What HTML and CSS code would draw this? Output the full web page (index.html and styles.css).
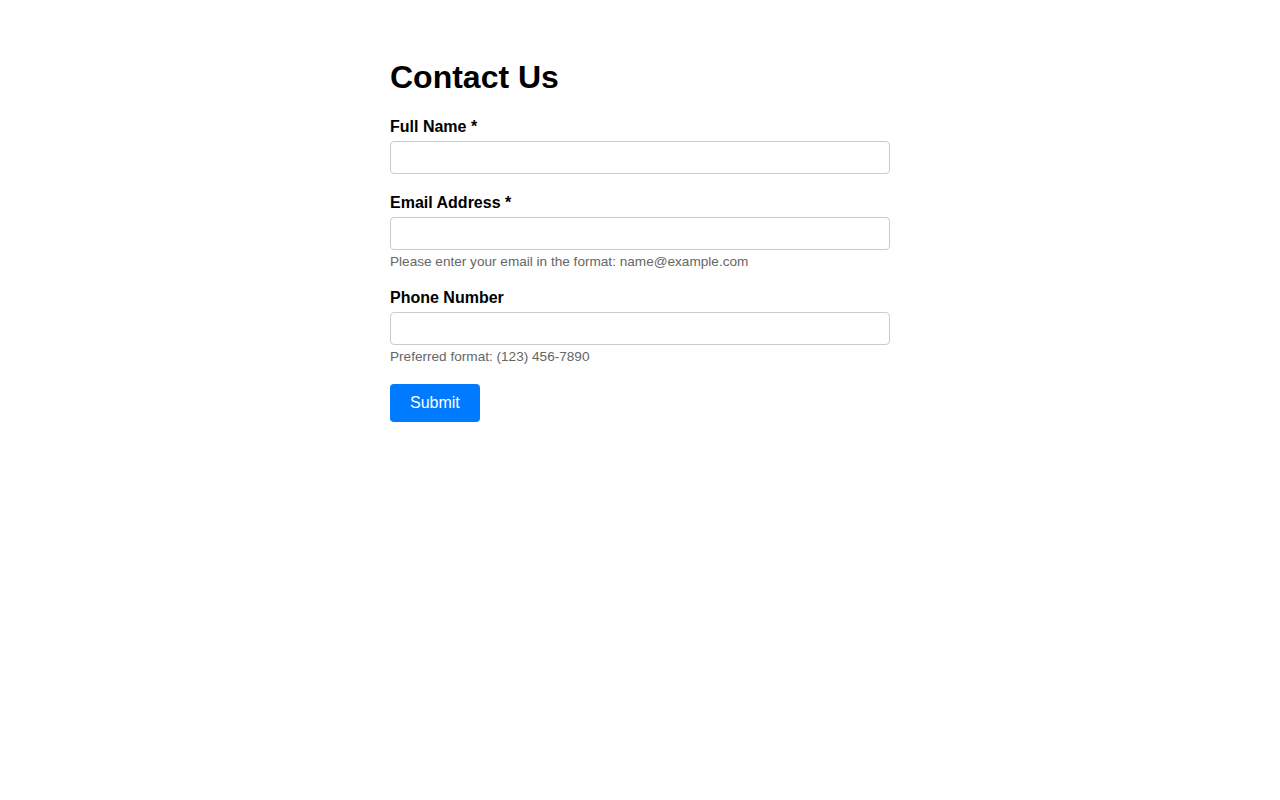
FILE: index.html
```html
<!DOCTYPE html>
<html lang="en">
<head>
<meta charset="utf-8">
<title>Contact Us</title>
<link rel="stylesheet" href="styles.css">
</head>
<body>
<main class="container">
  <h1 class="title">Contact Us</h1>
  <form class="form">
    <div class="group">
      <label class="label" for="name">Full Name *</label>
      <input class="input" id="name" type="text">
    </div>
    <div class="group">
      <label class="label" for="email">Email Address *</label>
      <input class="input" id="email" type="email">
      <small class="help">Please enter your email in the format: name@example.com</small>
    </div>
    <div class="group">
      <label class="label" for="phone">Phone Number</label>
      <input class="input" id="phone" type="tel">
      <small class="help">Preferred format: (123) 456-7890</small>
    </div>
    <button class="submit" type="button">Submit</button>
  </form>
</main>
</body>
</html>
```

FILE: styles.css
```css
html, body {
  margin: 0;
  padding: 0;
  background: #fff;
}
body {
  font-family: "Liberation Sans", Arial, sans-serif;
  color: #000;
}
.container {
  width: 500px;
  margin: 0 auto;
  padding-top: 59px;
}
.title {
  font-size: 32px;
  font-weight: bold;
  margin: 0 0 22px;
}
.form {
  display: flex;
  flex-direction: column;
}
.group {
  display: flex;
  flex-direction: column;
  margin-bottom: 20px;
}
.label {
  font-size: 16px;
  font-weight: bold;
  margin-bottom: 5px;
}
.input {
  box-sizing: border-box;
  width: 100%;
  height: 33px;
  padding: 8px;
  border: 1px solid #ccc;
  border-radius: 4px;
  font-family: "Liberation Sans", Arial, sans-serif;
  font-size: 13px;
  margin: 0;
}
.help {
  font-size: 13.6px;
  color: #666;
  margin-top: 4px;
}
.submit {
  align-self: flex-start;
  background: #007bff;
  color: #fff;
  border: none;
  border-radius: 4px;
  padding: 10px 20px;
  font-family: "Liberation Sans", Arial, sans-serif;
  font-size: 16px;
  line-height: 18px;
  height: 38px;
  cursor: pointer;
}
```
